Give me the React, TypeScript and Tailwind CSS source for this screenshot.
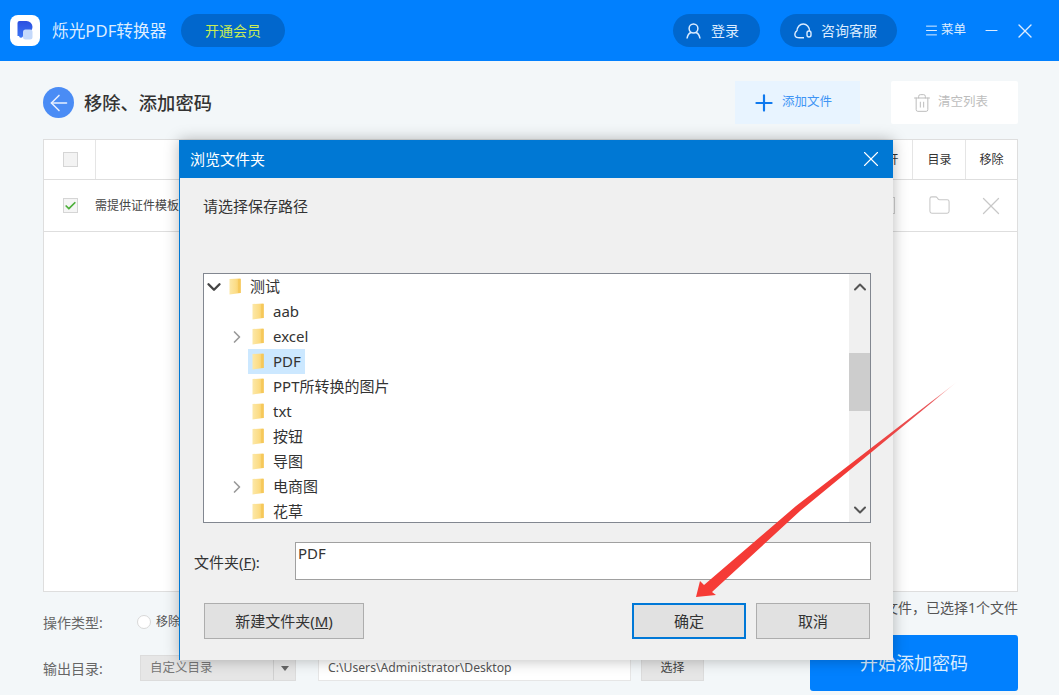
import React from "react";
import { Plus, X, Menu, Minus, Trash2, Folder, ArrowLeft, ChevronDown, ChevronRight, ChevronUp, Check } from "lucide-react";

function TreeFolder() {
  return (
    <svg width="12" height="17" viewBox="0 0 12 17" className="shrink-0">
      <defs>
        <linearGradient id="fg" x1="0" y1="0" x2="1" y2="0">
          <stop offset="0" stopColor="#fce8a8" />
          <stop offset="0.6" stopColor="#fcdc85" />
          <stop offset="1" stopColor="#f6c95e" />
        </linearGradient>
      </defs>
      <path d="M0.5 1 L11.5 0.5 L11.5 15 L0.5 16.5 Z" fill="url(#fg)" />
      <rect x="9" y="1" width="3" height="14" fill="#f5c655" opacity="0.7" />
    </svg>
  );
}

type Item = { name: string; arrow?: boolean; selected?: boolean };
const items: Item[] = [
  { name: "aab" },
  { name: "excel", arrow: true },
  { name: "PDF", selected: true },
  { name: "PPT所转换的图片" },
  { name: "txt" },
  { name: "按钮" },
  { name: "导图" },
  { name: "电商图", arrow: true },
  { name: "花草" },
];

function TreeRow({ item }: { item: Item }) {
  return (
    <div className="h-[25px] flex items-center shrink-0">
      <div className="w-[44px] shrink-0 flex justify-end pr-[1px]">
        {item.arrow && <ChevronRight size={20} strokeWidth={2} className="text-[#999]" />}
      </div>
      <div className={`h-[25px] flex items-center pl-[4px] pr-[4px] ${item.selected ? "bg-[#cce8ff]" : ""}`}>
        <TreeFolder />
        <span className="ml-[9px] text-[15px] leading-[25px] text-[#333]">{item.name}</span>
      </div>
    </div>
  );
}

function Logo() {
  return (
    <div className="w-[30px] h-[31px] bg-white rounded-[8px] flex items-center justify-center">
      <svg width="16" height="19" viewBox="0 0 16 19">
        <defs>
          <linearGradient id="lg" x1="0" y1="0" x2="0" y2="1">
            <stop offset="0" stopColor="#2b4fe0" />
            <stop offset="1" stopColor="#3a76f5" />
          </linearGradient>
        </defs>
        <path d="M2.5 0 H9.5 A6 6 0 0 1 9.5 12 H6 V14.5 A2 2 0 0 1 2 15 L0.5 15 V2 A2 2 0 0 1 2.5 0 Z" fill="url(#lg)" />
        <rect x="6" y="8.5" width="9.5" height="10" rx="2.5" fill="#c4d9fb" />
      </svg>
    </div>
  );
}

function UserIcon() {
  return (
    <svg width="15" height="16" viewBox="0 0 15 16" fill="none" stroke="currentColor" strokeWidth="1.5">
      <circle cx="7.5" cy="5.5" r="4.4" />
      <path d="M1 15.5 C1.5 12.5 3.5 10 5 9.5 M14 15.5 C13.5 12.5 11.5 10 10 9.5" />
    </svg>
  );
}

function HeadsetIcon() {
  return (
    <svg width="18" height="17" viewBox="0 0 18 17" fill="none" stroke="currentColor" strokeWidth="1.4">
      <path d="M3 9 A6.2 7 0 0 1 15.5 9" />
      <path d="M3 9 C0.5 10 0.3 13.5 2 15 C3 16 6 15.8 10 15.8" />
      <rect x="13" y="9" width="4" height="6" rx="2" />
    </svg>
  );
}

function WinButton({ w, label, accent }: { w: string; label: React.ReactNode; accent?: boolean }) {
  return (
    <div className={`${w} h-[36px] flex items-center justify-center bg-[#e1e1e1] text-[15px] text-[#333] border ${accent ? "border-[#0078d7] border-2" : "border-[#adadad]"}`}>
      {label}
    </div>
  );
}

export default function App() {
  return (
    <div className="relative w-[1059px] h-[695px] overflow-hidden bg-[#f3f7f9] font-['Noto_Sans','Noto_Sans_CJK_SC',sans-serif] text-[#333]">
      {/* title bar */}
      <header className="h-[61px] bg-[#0180fe] flex items-center pl-[10px] pr-[22px] text-[#dcecff]">
        <Logo />
        <span className="ml-[12px] text-[16.7px] w-[129px] whitespace-nowrap">烁光PDF转换器</span>
        <div className="h-[33px] w-[104px] rounded-full bg-[#0167cd] flex items-center justify-center text-[14px] text-[#c8ec55]">开通会员</div>
        <div className="flex-1" />
        <div className="h-[33px] w-[87px] rounded-full bg-[#0167cd] flex items-center pl-[13px] gap-[10px] text-[14px]">
          <UserIcon />
          <span>登录</span>
        </div>
        <div className="ml-[20px] h-[33px] w-[117px] rounded-full bg-[#0167cd] flex items-center pl-[14px] gap-[9px] text-[14px]">
          <HeadsetIcon />
          <span>咨询客服</span>
        </div>
        <div className="ml-[27px] flex items-center gap-[2px] text-[12.5px]">
          <Menu size={15} strokeWidth={1.6} />
          <span>菜单</span>
        </div>
        <Minus size={19} strokeWidth={1.3} className="ml-[16px]" />
        <X size={24} strokeWidth={1.4} className="ml-[12px]" />
      </header>

      <main className="pl-[43px] pr-[41px]">
        {/* toolbar */}
        <div className="mt-[20px] h-[43px] flex items-center">
          <div className="w-[31px] h-[31px] rounded-full bg-[#4a8cf5] flex items-center justify-center text-[#e8f0ff]">
            <ArrowLeft size={26} strokeWidth={1.4} />
          </div>
          <h1 className="ml-[10px] text-[18.3px] font-medium text-[#333]">移除、添加密码</h1>
          <div className="flex-1" />
          <div className="w-[125px] h-[43px] bg-[#e8f4ff] flex items-center pl-[16px] gap-[5px] text-[12.5px] text-[#3f95f5]">
            <Plus size={26} strokeWidth={2} className="text-[#0f79ee]" />
            <span>添加文件</span>
          </div>
          <div className="ml-[31px] w-[127px] h-[43px] bg-white rounded-[2px] flex items-center pl-[21px] gap-[6px] text-[12.5px] text-[#bdbdbd]">
            <Trash2 size={20} strokeWidth={1.2} />
            <span>清空列表</span>
          </div>
        </div>

        {/* table */}
        <section className="mt-[15px] h-[453px] bg-white border border-[#dedede]">
          <div className="h-[40px] flex border-b border-[#dedede] text-[12px]">
            <div className="w-[52px] flex items-center justify-center border-r border-[#e5e5e5]">
              <div className="w-[15px] h-[15px] border border-[#d5d5d5] bg-[#f3f3f3] ml-[1px]" />
            </div>
            <div className="flex-1" />
            <div className="w-[54px] flex items-center justify-center pl-[3px]">打开</div>
            <div className="w-[53px] flex items-center justify-center border-l border-[#e5e5e5] pl-[1px]">目录</div>
            <div className="w-[52px] flex items-center justify-center border-l border-[#e5e5e5]">移除</div>
          </div>
          <div className="h-[52px] flex items-center border-b border-[#dedede] text-[12px] text-[#444]">
            <div className="w-[52px] flex items-center justify-center">
              <div className="w-[15px] h-[15px] border border-[#d5d5d5] bg-[#f5f5f5] ml-[1px] flex items-center justify-center">
                <Check size={14} strokeWidth={3.2} className="text-[#4caf3a]" />
              </div>
            </div>
            <span className="-ml-[1px]">需提供证件模板</span>
            <div className="flex-1" />
            <div className="w-[54px] flex items-center justify-center pl-[3px]">
              <div className="w-[17px] h-[17px] border border-[#cfcfcf]" />
            </div>
            <div className="w-[53px] flex items-center justify-center text-[#c8c8c8] pl-[2px]">
              <Folder size={23} strokeWidth={1.1} />
            </div>
            <div className="w-[52px] flex items-center justify-center text-[#c8c8c8]">
              <X size={30} strokeWidth={1} />
            </div>
          </div>
        </section>

        {/* footer */}
        <div className="mt-[5px] flex justify-between">
          <div className="flex flex-col pt-[13px] text-[14px] text-[#666]">
            <div className="h-[24px] flex items-center">
              <span className="w-[94px]">操作类型:</span>
              <div className="w-[14px] h-[14px] rounded-full border border-[#d8d8d8] bg-white shrink-0" />
              <span className="ml-[5px] text-[12px] text-[#555]">移除</span>
            </div>
            <div className="mt-[21px] h-[26px] flex items-center">
              <span className="w-[97px]">输出目录:</span>
              <div className="w-[156px] h-[26px] bg-[#e6e6e6] border border-[#dcdcdc] flex items-center text-[12.5px] text-[#777]">
                <span className="flex-1 pl-[9px]">自定义目录</span>
                <div className="w-[22px] h-full border-l border-[#d0d0d0] flex items-center justify-center">
                  <div className="w-0 h-0 border-x-[4px] border-x-transparent border-t-[5px] border-t-[#666]" />
                </div>
              </div>
              <div className="ml-[22px] w-[313px] h-[26px] bg-white border border-[#e6e6e6] flex items-center pl-[9px] text-[12.2px] text-[#555]">
                C:\Users\Administrator\Desktop
              </div>
              <div className="ml-[10px] w-[63px] h-[26px] bg-[#e6e6e6] border border-[#dcdcdc] flex items-center justify-center text-[12px] text-[#444]">选择</div>
            </div>
          </div>
          <div className="flex flex-col items-end">
            <div className="h-[18px] mt-[1px] flex items-center text-[14px] text-[#555] whitespace-nowrap">共1个文件，已选择1个文件</div>
            <div className="mt-[19px] w-[208px] h-[56px] rounded-[3px] bg-[#0180fe] flex items-center justify-center text-[18px] text-[#d9ecff]">开始添加密码</div>
          </div>
        </div>
      </main>

      {/* dialog */}
      <div className="absolute left-[179px] top-[140px] w-[714px] h-[520px] bg-[#f0f0f0] border-l border-[#0078d4] shadow-[0_0_14px_rgba(0,0,0,0.28)] flex flex-col">
        <div className="h-[38px] ml-[-1px] bg-[#0078d4] flex items-center justify-between pl-[11px] pr-[9px] text-white">
          <span className="text-[15px]">浏览文件夹</span>
          <X size={26} strokeWidth={1} />
        </div>
        <div className="pl-[23px] pt-[17px] text-[15px] leading-[22px] text-[#333]">请选择保存路径</div>
        <div className="mt-[56px] ml-[23px] w-[668px] h-[250px] bg-white border border-[#828790] flex overflow-hidden">
          <div className="flex-1 min-w-0 flex flex-col">
            <div className="h-[25px] flex items-center shrink-0">
              <ChevronDown size={22} strokeWidth={2.6} className="text-[#444] shrink-0 -ml-[1px]" />
              <div className="ml-[4px] flex items-center">
                <TreeFolder />
                <span className="ml-[9px] text-[15px] text-[#333]">测试</span>
              </div>
            </div>
            {items.map((it) => (
              <TreeRow key={it.name} item={it} />
            ))}
          </div>
          <div className="w-[21px] bg-[#f0f0f0] flex flex-col items-center">
            <div className="h-[25px] flex items-center justify-center">
              <ChevronUp size={20} strokeWidth={2.4} className="text-[#555]" />
            </div>
            <div className="mt-[54px] w-full h-[58px] bg-[#cdcdcd]" />
            <div className="flex-1" />
            <div className="h-[25px] flex items-center justify-center">
              <ChevronDown size={20} strokeWidth={2.4} className="text-[#555]" />
            </div>
          </div>
        </div>
        <div className="mt-[19px] flex items-start ml-[14px]">
          <span className="w-[101px] pt-[9px] text-[15px] text-[#333] whitespace-nowrap">
            文件夹(<span className="underline">F</span>):
          </span>
          <div className="w-[576px] h-[38px] bg-white border border-[#a0a0a0] pl-[2px] text-[15px] leading-[20px] text-[#333]">PDF</div>
        </div>
        <div className="mt-[23px] ml-[24px] w-[666px] flex">
          <WinButton
            w="w-[160px]"
            label={
              <span>
                新建文件夹(<span className="underline">M</span>)
              </span>
            }
          />
          <div className="flex-1" />
          <WinButton w="w-[114px]" label="确定" accent />
          <div className="w-[10px]" />
          <WinButton w="w-[114px]" label="取消" />
        </div>
      </div>

      {/* annotation arrow */}
      <svg className="absolute left-0 top-0 pointer-events-none" width="1059" height="695" viewBox="0 0 1059 695">
        <defs>
          <linearGradient id="arrowFill" gradientUnits="userSpaceOnUse" x1="958" y1="381" x2="697" y2="597">
            <stop offset="0" stopColor="#f23a36" stopOpacity="0" />
            <stop offset="0.1" stopColor="#e4383c" stopOpacity="0.85" />
            <stop offset="0.4" stopColor="#f23a36" />
            <stop offset="1" stopColor="#f63b36" />
          </linearGradient>
        </defs>
        <polygon points="958,381 800,511 712,592 716,595 696,597 700,581 704,585 796,506" fill="url(#arrowFill)" />
      </svg>
    </div>
  );
}
